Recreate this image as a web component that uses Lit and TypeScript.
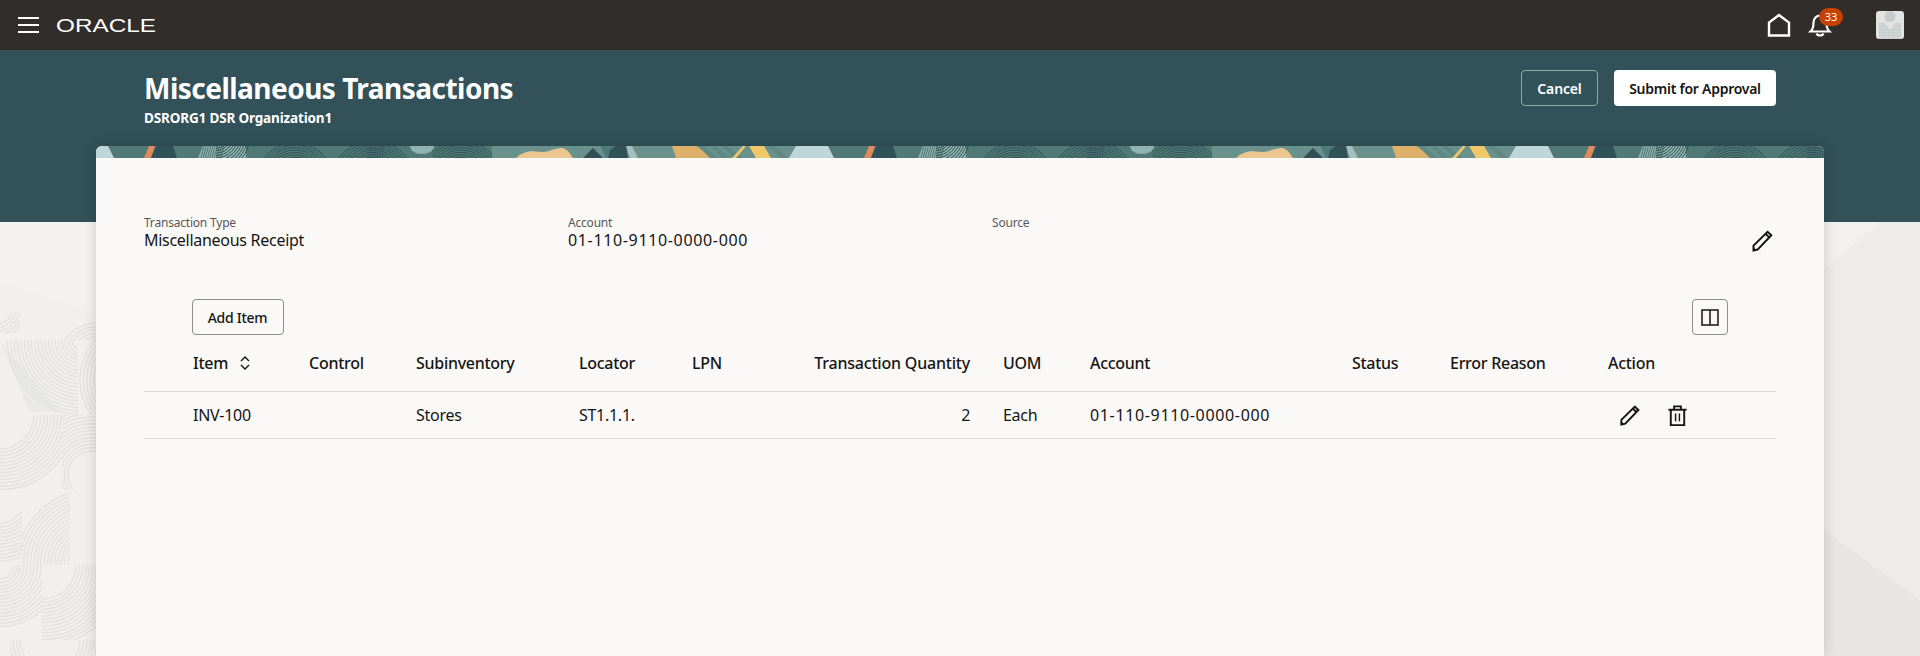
import { LitElement, html, css, svg } from "lit";
import { customElement } from "lit/decorators.js";

const rings = (cx: number, cy: number, r0: number, r1: number, step: number, color: string, w: number) => {
  const out = [];
  for (let r = r0; r <= r1; r += step) {
    out.push(svg`<circle cx=${cx} cy=${cy} r=${r} fill="none" stroke=${color} stroke-width=${w}></circle>`);
  }
  return out;
};

const hatch = (x0: number, x1: number, step: number, color: string, slant: number) => {
  const out = [];
  for (let x = x0; x <= x1; x += step) {
    out.push(svg`<line x1=${x} y1="0" x2=${x - slant} y2="12" stroke=${color} stroke-width="0.7"></line>`);
  }
  return out;
};

const tile = svg`
  <rect width="720" height="12" fill="#517a76"></rect>
  <rect x="396" width="324" height="12" fill="#6b918c"></rect>
  <polygon points="700,0 732,0 738,12 693,12" fill="#bfd6d8"></polygon>
  <polygon points="-20,0 12,0 18,12 -27,12" fill="#bfd6d8"></polygon>
  <polygon points="53,0 59,0 55,12 48,12" fill="#e08a5c"></polygon>
  <polygon points="60,0 77,0 81,12 55,12" fill="#2f5157"></polygon>
  <polygon points="107,0 150,0 150,12 102,12" fill="#8fb3af"></polygon>
  ${hatch(108, 128, 2.2, "#35595c", 3)}
  <svg x="120" y="0" width="34" height="12">${rings(0, -10, 10, 34, 2.4, "#2f5157", 1)}</svg>
  <svg x="168" y="0" width="72" height="12">${rings(31, 36, 20, 40, 2.4, "#2f5157", 1)}</svg>
  <svg x="236" y="0" width="88" height="12">${rings(41, 36, 20, 42, 2.4, "#2f5157", 1)}${hatch(36, 52, 2.4, "#2f5157", 0)}</svg>
  <ellipse cx="326" cy="0" rx="12" ry="8" fill="#8fb3af"></ellipse>
  <svg x="336" y="0" width="60" height="12">${rings(29, 36, 20, 42, 2.4, "#2f5157", 1)}</svg>
  <path d="M420 12 C426 6 434 4 444 6 C452 7 460 1 466 2 C472 3 474 8 477 12 Z" fill="#ebc78f"></path>
  <polygon points="487,12 497,2 507,12" fill="#2f5157"></polygon>
  <polygon points="504,0 532,0 530,12 510,12" fill="#517a76"></polygon>
  <polygon points="514,4 520,0 530,0 532,12 512,12" fill="#2f5157"></polygon>
  <polygon points="530,0 536,0 542,12 534,12" fill="#a5c0bd"></polygon>
  <polygon points="576,0 600,0 618,12 580,12" fill="#ddb06a"></polygon>
  ${[602, 614, 626, 672].map((x) => svg`<polygon points="${x},0 ${x + 6},0 ${x + 20},12 ${x + 12},12" fill="#5f8783"></polygon>`)}
  <polygon points="647,0 650,0 640,12 636,12" fill="#f2c96a"></polygon>
  <polygon points="653,0 668,0 675,12 660,12" fill="#f2c96a"></polygon>
`;

const LINE = "#e2e2e0";
const cell = (x: number, y: number, w: number, h: number, cx: number, cy: number, r0: number, r1: number) =>
  svg`<svg x=${x} y=${y} width=${w} height=${h}>${rings(cx, cy, r0, r1, 3.4, LINE, 1.5)}</svg>`;

@customElement("app-root")
export class AppRoot extends LitElement {
  static styles = css`
    :host {
      display: block;
      width: 1920px;
      height: 656px;
      overflow: hidden;
      font-family: "Noto Sans", "Liberation Sans", sans-serif;
      color: #161513;
    }
    .topbar {
      height: 50px;
      background: #312d2a;
      display: flex;
      align-items: center;
      padding: 0 16px 0 18px;
    }
    .burger { width: 21px; height: 16px; display: block; }
    .logo { width: 101px; height: 18px; margin-left: 17px; margin-top: 2px; display: block; overflow: visible; }
    .logo text {
      font-family: "Liberation Sans", sans-serif;
      font-size: 17.5px;
      fill: #fff;
    }
    .top-right { margin-left: auto; display: flex; align-items: center; }
    .home { width: 24px; height: 24px; display: block; margin-right: 17px; }
    .bell-wrap { position: relative; width: 24px; height: 24px; margin-right: 44px; }
    .bell { width: 24px; height: 24px; display: block; }
    .badge {
      position: absolute;
      left: 11px;
      top: -5px;
      width: 24px;
      height: 18px;
      border-radius: 9px;
      background: #c74100;
      color: #fff;
      font-size: 11px;
      line-height: 18px;
      text-align: center;
    }
    .avatar { width: 28px; height: 28px; border-radius: 3px; display: block; overflow: hidden; }

    .page { position: relative; height: 606px; background: #f1f0ee; }
    .page-bg { position: absolute; left: 0; top: 172px; display: block; }
    .hero {
      position: relative;
      height: 172px;
      background: #325158;
      box-sizing: border-box;
      padding: 20px 144px 0;
      display: flex;
      justify-content: space-between;
      align-items: flex-start;
    }
    .title { margin: 0; font-size: 28px; line-height: 36px; font-weight: 700; color: #fff; letter-spacing: -0.52px; }
    .subtitle { font-size: 13.5px; line-height: 18px; margin-top: 3px; font-weight: 700; color: #fff; letter-spacing: -0.16px; }
    .hero-actions { display: flex; gap: 16px; }
    button {
      font-family: inherit;
      height: 36px;
      box-sizing: border-box;
      border-radius: 4px;
      font-size: 14px;
      font-weight: 600;
      letter-spacing: -0.15px;
      cursor: pointer;
      padding: 0;
    }
    .cancel { width: 77px; background: transparent; color: #fff; border: 1px solid #8fa9ab; }
    .submit { width: 162px; background: #fff; color: #161513; border: none; letter-spacing: -0.26px; }
    .card {
      position: relative;
      margin: -76px 96px 0;
      height: 510px;
      background: #fbf9f8;
      border-radius: 6px 6px 0 0;
      box-shadow: 0 0 14px rgba(0, 0, 0, 0.16);
      overflow: hidden;
    }
    .strip { display: block; width: 100%; height: 12px; }
    .card-body { padding: 57px 48px 0; }
    .fields {
      display: grid;
      grid-template-columns: 424px 424px 1fr auto;
      height: 33px;
    }
    .label { font-size: 12px; line-height: 16px; color: #5a5856; letter-spacing: -0.2px; }
    .value { font-size: 16px; line-height: 20px; margin-top: -1px; letter-spacing: -0.28px; }
    .num { letter-spacing: 0.65px; }
    .edit-main { width: 24px; height: 24px; display: block; margin-top: 14px; margin-right: 2px; }
    .toolbar {
      margin-top: 51px;
      padding: 0 48px 0 47.5px;
      display: flex;
      justify-content: space-between;
    }
    .add { width: 92px; background: transparent; border: 1px solid #8f8c89; color: #161513; font-weight: 500; letter-spacing: -0.28px; }
    .cols {
      width: 36px;
      background: transparent;
      border: 1px solid #8f8c89;
      display: flex;
      align-items: center;
      justify-content: center;
    }
    .row {
      display: grid;
      grid-template-columns: 116px 107px 163px 113px 104px 207px 87px 262px 98px 158px 1fr;
      padding-left: 49px;
      border-bottom: 1px solid #dedcda;
      align-items: center;
      font-size: 16px;
      letter-spacing: -0.28px;
    }
    .head { height: 57px; padding-bottom: 1px; box-sizing: border-box; font-weight: 500; }
    .head .qty { letter-spacing: -0.2px; }
    .body-row { height: 47px; box-sizing: border-box; }
    .qty { text-align: right; padding-right: 33px; }
    .item-head { display: flex; align-items: center; gap: 11px; }
    .sort { width: 12px; height: 16px; display: block; }
    .actions { display: flex; gap: 25px; padding-left: 10px; }
    .actions svg { width: 23px; height: 23px; display: block; }
  `;

  private pencil(cls = "") {
    return html`<svg class=${cls} viewBox="0 0 24 24" fill="none" stroke="#161513" stroke-width="2" aria-label="Edit">
      <path d="M3.5 21.5 V16.6 L17.6 2.8 L21.3 6.3 L7.6 20.6 Z" stroke-linejoin="miter"></path>
      <path d="M15.6 4.9 L19.2 8.4"></path>
      <path d="M3.5 21.5 L3.5 18.8 L6.2 21.2 Z" fill="#161513" stroke-width="1"></path>
    </svg>`;
  }

  private trash() {
    return html`<svg viewBox="0 0 24 24" fill="none" stroke="#161513" stroke-width="2" aria-label="Delete">
      <path d="M2.5 6 H21.5"></path>
      <path d="M8.5 5.5 V2.5 H15.5 V5.5"></path>
      <path d="M5 6 V22 H19 V6"></path>
      <path d="M10 10 V18 M14 10 V18" stroke-width="1.5"></path>
    </svg>`;
  }

  render() {
    return html`
      <div class="topbar">
        <svg class="burger" viewBox="0 0 21 16" aria-label="Menu">
          <path d="M0 1 H21 M0 8 H21 M0 15 H21" stroke="#fff" stroke-width="1.8"></path>
        </svg>
        <svg class="logo" viewBox="0 0 101 18" aria-label="Oracle">
          <text x="0" y="15" textLength="100" lengthAdjust="spacingAndGlyphs">ORACLE</text>
        </svg>
        <div class="top-right">
          <svg class="home" viewBox="0 0 24 24" fill="none" stroke="#fff" stroke-width="2.4" aria-label="Home">
            <path d="M2 22.5 V9.5 L12 2 L22 9.5 V22.5 Z"></path>
          </svg>
          <div class="bell-wrap">
            <svg class="bell" viewBox="0 0 24 24" fill="none" stroke="#fff" stroke-width="2.2" aria-label="Notifications">
              <path d="M2.5 18.5 C5.5 16 5.5 13 5.5 9.5 C5.5 5.5 8.5 2.5 12 2.5 C15.5 2.5 18.5 5.5 18.5 9.5 C18.5 13 18.5 16 21.5 18.5 Z"></path>
              <path d="M8.5 20.5 C9.5 23 14.5 23 15.5 20.5"></path>
            </svg>
            <span class="badge">33</span>
          </div>
          <svg class="avatar" viewBox="0 0 28 28" aria-label="User">
            <defs>
              <pattern id="dots" width="3" height="3" patternUnits="userSpaceOnUse">
                <rect width="3" height="3" fill="#cdd5d4"></rect>
                <rect width="1" height="1" fill="#bcc6c5"></rect>
              </pattern>
            </defs>
            <rect width="28" height="28" fill="#e3e3e0"></rect>
            <circle cx="14" cy="5.5" r="5.5" fill="#c5cdcc"></circle>
            <polygon points="3,12 9,12 14,19 19,12 25,12 25,28 3,28" fill="url(#dots)"></polygon>
          </svg>
        </div>
      </div>
      <div class="page">
        <svg class="page-bg" width="1920" height="434" viewBox="0 0 1920 434" aria-hidden="true">
          <polygon points="0,0 96,0 96,90 0,60" fill="#f3f2f0"></polygon>
          <polygon points="1824,0 1920,0 1920,434 1824,434" fill="#edecea"></polygon>
          <polygon points="1824,48 1880,0 1824,0" fill="#f2f1ef"></polygon>
          <polygon points="1824,308 1920,378 1920,434 1824,434" fill="#e7e6e4"></polygon>
          <polygon points="0,120 30,190 60,190" fill="#e9e9e7"></polygon>
          ${cell(0, 91, 20, 20, -6, -8, 20, 34)}
          ${cell(42, 98, 54, 20, 56, 44, 24, 44)}
          ${cell(0, 118, 78, 75, 82, 0, 10, 78)}
          ${cell(78, 118, 18, 75, 60, 40, 24, 60)}
          ${cell(0, 193, 62, 75, 0, 0, 34, 76)}
          ${cell(62, 193, 34, 75, 30, 60, 24, 70)}
          ${cell(0, 268, 22, 75, -4, 0, 34, 74)}
          ${cell(22, 268, 48, 75, 70, 75, 14, 76)}
          ${cell(70, 268, 26, 75, 70, 50, 14, 44)}
          ${cell(0, 343, 42, 75, 0, 0, 14, 62)}
          ${cell(42, 343, 54, 75, 0, 0, 34, 84)}
          ${cell(10, 418, 86, 16, 40, 0, 30, 60)}
        </svg>
        <div class="hero">
          <div>
            <h1 class="title">Miscellaneous Transactions</h1>
            <div class="subtitle">DSRORG1 DSR Organization1</div>
          </div>
          <div class="hero-actions">
            <button class="cancel">Cancel</button>
            <button class="submit">Submit for Approval</button>
          </div>
        </div>
        <div class="card">
          <svg class="strip" width="1728" height="12" aria-hidden="true">
            <defs>
              <pattern id="tile" width="720" height="12" patternUnits="userSpaceOnUse">${tile}</pattern>
            </defs>
            <rect width="1728" height="12" fill="url(#tile)"></rect>
          </svg>
          <div class="card-body">
            <div class="fields">
              <div>
                <div class="label">Transaction Type</div>
                <div class="value">Miscellaneous Receipt</div>
              </div>
              <div>
                <div class="label">Account</div>
                <div class="value num">01-110-9110-0000-000</div>
              </div>
              <div><div class="label">Source</div></div>
              ${this.pencil("edit-main")}
            </div>
            <div class="toolbar">
              <button class="add">Add Item</button>
              <button class="cols" aria-label="Columns">
                <svg width="18" height="17" viewBox="0 0 18 17" fill="none" stroke="#161513" stroke-width="1.5">
                  <path d="M1 1 H17 V16 H1 Z M9 1 V16"></path>
                </svg>
              </button>
            </div>
            <div class="row head">
              <div class="item-head">
                Item
                <svg class="sort" viewBox="0 0 12 16" fill="none" stroke="#161513" stroke-width="1.4">
                  <path d="M2 6 L6 2 L10 6 M2 10 L6 14 L10 10"></path>
                </svg>
              </div>
              <div>Control</div>
              <div>Subinventory</div>
              <div>Locator</div>
              <div>LPN</div>
              <div class="qty">Transaction Quantity</div>
              <div>UOM</div>
              <div>Account</div>
              <div>Status</div>
              <div>Error Reason</div>
              <div>Action</div>
            </div>
            <div class="row body-row">
              <div>INV-100</div>
              <div></div>
              <div>Stores</div>
              <div>ST1.1.1.</div>
              <div></div>
              <div class="qty">2</div>
              <div>Each</div>
              <div class="num">01-110-9110-0000-000</div>
              <div></div>
              <div></div>
              <div class="actions">${this.pencil()}${this.trash()}</div>
            </div>
          </div>
        </div>
      </div>
    `;
  }
}
